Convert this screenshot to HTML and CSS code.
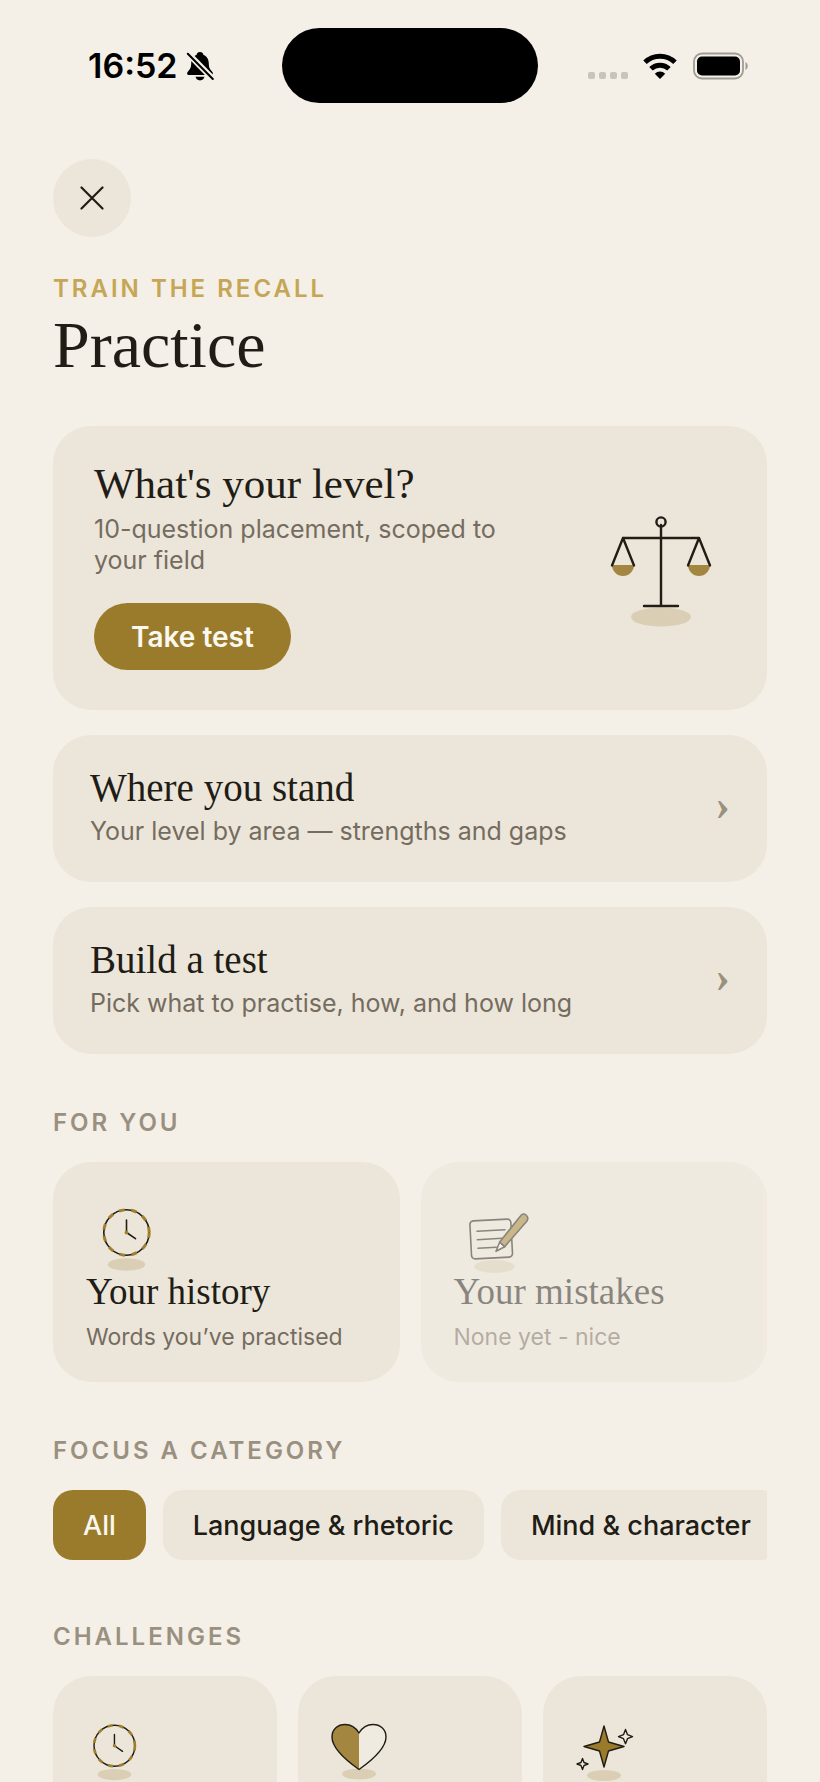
FILE: index.html
```html
<!DOCTYPE html>
<html lang="en">
<head>
  <meta charset="UTF-8">
  <meta name="viewport" content="width=device-width, initial-scale=1">
  <title>Practice</title>
  <link rel="stylesheet" href="styles.css">
</head>
<body>
  <div class="screen">

    <!-- Status bar -->
    <div class="statusbar">
      <div class="status-left">
        <span class="time">16:52</span>
        <svg class="bell" width="28" height="30" viewBox="0 0 28 30">
          <path d="M14 1c-2 0-3.200 1.200-3.400 2.700C6.800 5.200 5.300 8.500 5.200 12.500c-.1 4.500-1.200 5.800-3 7.700C.500 22 .800 24 3.200 24h21.600c2.400 0 2.700-2 1-3.800-1.800-1.900-2.900-3.200-3-7.700-.1-4-1.600-7.300-5.400-8.800C17.200 2.200 16 1 14 1z"/>
          <path d="M9.500 25.800h9c-.6 2.200-2.300 3.600-4.500 3.600s-3.900-1.400-4.500-3.600z"/>
          <path class="bell-gap" d="M1 1.500l26 26.500"/>
          <path class="bell-slash" d="M1.800 2.800l25 25.200"/>
        </svg>
      </div>
      <div class="island"></div>
      <div class="status-right">
        <svg width="40" height="26" viewBox="0 0 40 26" fill="#c8c3bb">
          <rect x="0" y="19" width="7" height="7" rx="2"/>
          <rect x="11" y="19" width="7" height="7" rx="2"/>
          <rect x="22" y="19" width="7" height="7" rx="2"/>
          <rect x="33" y="19" width="7" height="7" rx="2"/>
        </svg>
        <svg width="34" height="26" viewBox="0 0 34 26">
          <path d="M2 9.300a21.500 21.500 0 0 1 30 0" fill="none" stroke="#000" stroke-width="5"/>
          <path d="M8 15.800a13 13 0 0 1 18 0" fill="none" stroke="#000" stroke-width="5"/>
          <path d="M17 26l-5.200-5.300a7.400 7.400 0 0 1 10.400 0z"/>
        </svg>
        <svg width="56" height="28" viewBox="0 0 56 28">
          <rect x="2" y="1.500" width="49" height="25" rx="8" fill="none" stroke="#9f9b95" stroke-width="1.800"/>
          <rect x="5" y="4.500" width="43" height="19" rx="5"/>
          <path d="M53.500 10c3 1.500 3 6.500 0 8z" fill="#9f9b95"/>
        </svg>
      </div>
    </div>

    <main class="content">
      <button class="close" type="button" aria-label="Close">
        <svg width="24" height="24" viewBox="0 0 24 24">
          <path d="M1.500 1.500l21 21M22.500 1.500l-21 21" fill="none" stroke="#211c15" stroke-width="2.200" stroke-linecap="round"/>
        </svg>
      </button>

      <p class="eyebrow gold">TRAIN THE RECALL</p>
      <h1>Practice</h1>

      <!-- Placement test -->
      <section class="card level">
        <div class="level-text">
          <h2>What's your level?</h2>
          <p class="sub">10-question placement, scoped to your field</p>
          <button class="take-test" type="button">Take test</button>
        </div>
        <svg class="scales" width="130" height="130" viewBox="0 -2 130 130">
          <ellipse cx="65" cy="115" rx="30" ry="9.500" fill="#dacfb5"/>
          <path d="M16 63h22a11 11 0 0 1-22 0zM92 63h22a11 11 0 0 1-22 0z" fill="#a38740"/>
          <g fill="none" stroke="#211c15" stroke-width="2.400" stroke-linecap="round" stroke-linejoin="round">
            <circle cx="65" cy="20" r="4.600"/>
            <path d="M65 23v81M48 104h34M27 36h76M16 63.500l11-27.500 11 27.500M92 63.500l11-27.500 11 27.500"/>
          </g>
        </svg>
      </section>

      <a class="card row" href="#stand">
        <span class="row-text">
          <span class="row-title">Where you stand</span>
          <span class="sub">Your level by area — strengths and gaps</span>
        </span>
        <span class="chevron">›</span>
      </a>

      <a class="card row" href="#build">
        <span class="row-text">
          <span class="row-title">Build a test</span>
          <span class="sub">Pick what to practise, how, and how long</span>
        </span>
        <span class="chevron">›</span>
      </a>

      <!-- For you -->
      <h3 class="eyebrow section">FOR YOU</h3>
      <div class="tiles">
        <a class="card tile" href="#history">
          <svg width="80" height="80" viewBox="0 0 80 80">
            <ellipse cx="40.500" cy="69.500" rx="18.700" ry="6.200" fill="#dacfb5"/>
            <g fill="none" stroke="#211c15" stroke-width="1.600" stroke-linecap="round">
              <circle cx="40.500" cy="37.500" r="22.700"/>
              <circle cx="40.500" cy="37.500" r="22.700" stroke="#a0802c" stroke-width="3" stroke-dasharray="5.500 6.850" stroke-linecap="butt"/>
              <path d="M40.500 37.500v-12.500M40.500 37.500l9 6.200"/>
            </g>
            <circle cx="40.500" cy="37.500" r="1.900" fill="#a0802c"/>
          </svg>
          <span class="tile-title">Your history</span>
          <span class="tile-sub">Words you’ve practised</span>
        </a>
        <a class="card tile disabled" href="#mistakes" aria-disabled="true">
          <svg width="80" height="80" viewBox="0 0 80 80">
            <ellipse cx="40.500" cy="71.500" rx="20.300" ry="6.500" fill="#dacfb5"/>
            <g fill="none" stroke="#211c15" stroke-width="1.600" stroke-linecap="round" stroke-linejoin="round">
              <rect x="16.700" y="25" width="41" height="38" rx="3.500" transform="rotate(-3 37.200 44)"/>
              <path d="M23 36.300l28-1.600M23.300 44.700l24.400-1.400M24 53.300l18.300-1"/>
              <path d="M42 56.300l3.700-9.300 5 4.700z" fill="#faf7f1"/>
              <path d="M45.700 47L66.500 21q2.500-3.500 5.500-1t1 6L50.700 51.700z" fill="#a0802c"/>
            </g>
          </svg>
          <span class="tile-title">Your mistakes</span>
          <span class="tile-sub">None yet - nice</span>
        </a>
      </div>

      <!-- Category filter -->
      <h3 class="eyebrow section">FOCUS A CATEGORY</h3>
      <div class="chips">
        <button class="chip active" type="button">All</button>
        <button class="chip" type="button">Language &amp; rhetoric</button>
        <button class="chip" type="button">Mind &amp; character</button>
      </div>

      <!-- Challenges -->
      <h3 class="eyebrow section challenges-title">CHALLENGES</h3>
      <div class="tiles">
        <a class="card challenge" href="#timed" aria-label="Timed">
          <svg width="72" height="72" viewBox="0 0 80 80">
            <ellipse cx="40.500" cy="69.500" rx="18.700" ry="6.200" fill="#dacfb5"/>
            <g fill="none" stroke="#211c15" stroke-width="1.600" stroke-linecap="round">
              <circle cx="40.500" cy="37.500" r="22.700"/>
              <circle cx="40.500" cy="37.500" r="22.700" stroke="#a0802c" stroke-width="3" stroke-dasharray="5.500 6.850" stroke-linecap="butt"/>
              <path d="M40.500 37.500v-12.500M40.500 37.500l9 6.200"/>
            </g>
            <circle cx="40.500" cy="37.500" r="1.900" fill="#a0802c"/>
          </svg>
        </a>
        <a class="card challenge" href="#lives" aria-label="Lives">
          <svg width="72" height="72" viewBox="0 0 72 72">
            <ellipse cx="36" cy="62" rx="17" ry="5.500" fill="#dacfb5"/>
            <path d="M36 57.500C24 49 9 37 9 25 9 17 15 12.500 22 12.500c6.500 0 11 3.500 14 8.500z" fill="#a38740"/>
            <path d="M36 57.500C48 49 63 37 63 25c0-8-6-12.500-13-12.500-6.500 0-11 3.500-14 8.500z" fill="#f0ebe1"/>
            <path d="M36 57.500C24 49 9 37 9 25 9 17 15 12.500 22 12.500c6.500 0 11 3.500 14 8.500 3-5 7.500-8.500 14-8.500 7 0 13 4.500 13 12.500 0 12-15 24-27 32.500z" fill="none" stroke="#211c15" stroke-width="1.400" stroke-linejoin="round"/>
          </svg>
        </a>
        <a class="card challenge" href="#perfect" aria-label="Perfect">
          <svg width="72" height="72" viewBox="0 0 72 72">
            <ellipse cx="36" cy="63.500" rx="17" ry="5.500" fill="#dacfb5"/>
            <g stroke="#211c15" stroke-width="1.400" stroke-linejoin="round">
              <path d="M36 14l4.500 16L56 34.500 40.500 39 36 55l-4.500-16L16 34.500 31.500 30z" fill="#9a7b2c"/>
              <path d="M57.500 17.500l2 5.200 5 2-5 2-2 5-2-5-5-2 5-2zM14.500 46.500l1.500 4 4 1.500-4 1.500-1.500 4-1.500-4-4-1.500 4-1.500z" fill="#f0ebe1"/>
            </g>
          </svg>
        </a>
      </div>
    </main>
  </div>
</body>
</html>
```
FILE: styles.css
```css
* {
  box-sizing: border-box;
}
body {
  margin: 0;
  background-color: #f4efe7;
  color: #211c15;
  font-family: Inter, "Liberation Sans", sans-serif;
}
button {
  font-family: inherit;
  border: none;
  cursor: pointer;
}
a {
  color: inherit;
  text-decoration: none;
}
svg {
  display: block;
  flex-shrink: 0;
}
h1, h2, h3, p {
  margin: 0;
}
.screen {
  height: 100vh;
  overflow: hidden;
}

/* Status bar */
.statusbar {
  display: grid;
  grid-template-columns: 1fr 256px 1fr;
  align-items: center;
  padding-top: 28px;
  color: #000000;
}
.status-left {
  display: flex;
  align-items: center;
  gap: 8px;
  padding-left: 88px;
}
.time {
  font-size: 34px;
  line-height: 40px;
  font-weight: 600;
}
.bell-gap {
  stroke: #f4efe7;
  stroke-width: 6;
}
.bell-slash {
  stroke: #000000;
  stroke-width: 2;
  stroke-linecap: round;
}
.island {
  height: 75px;
  border-radius: 38px;
  background-color: #000000;
}
.status-right {
  display: flex;
  align-items: center;
  justify-content: flex-end;
  gap: 15px;
  padding-right: 72px;
}

.content {
  padding: 56px 53px 0;
}
.close {
  display: flex;
  align-items: center;
  justify-content: center;
  width: 78px;
  height: 78px;
  padding: 0;
  border-radius: 50%;
  background-color: #ece6da;
  margin-bottom: 37px;
}
.eyebrow {
  font-size: 24px;
  line-height: 30px;
  font-weight: 600;
  letter-spacing: 3px;
  color: #9a9080;
}
.gold {
  color: #c5a654;
}
h1, h2, .row-title, .tile-title, .chevron {
  font-family: "Liberation Serif", serif;
  font-weight: 400;
}
h1 {
  font-size: 66px;
  line-height: 82px;
  margin-bottom: 40px;
}

/* Cards */
.card {
  background-color: #ece6da;
  border-radius: 38px;
}
.sub {
  font-size: 25px;
  line-height: 31px;
  color: #756c60;
}
.level {
  display: flex;
  align-items: center;
  gap: 60px;
  padding: 33px 41px 40px;
}
.level-text {
  flex: 1;
}
h2 {
  font-size: 43px;
  line-height: 50px;
  margin-bottom: 5px;
}
.take-test {
  margin-top: 27px;
  height: 67px;
  padding: 0 37px;
  border-radius: 34px;
  background-color: #9a7b2c;
  color: #fbf8f0;
  font-size: 28px;
  font-weight: 600;
}
.row {
  display: flex;
  align-items: center;
  justify-content: space-between;
  margin-top: 25px;
  padding: 29px 37px 35px;
}
.row-text {
  display: flex;
  flex-direction: column;
  gap: 4px;
}
.row-title {
  font-size: 39px;
  line-height: 48px;
}
.chevron {
  font-size: 44px;
  line-height: 44px;
  font-weight: 700;
  color: #9a9080;
}

/* Sections */
.section {
  margin: 54px 0 24px;
}
.tiles {
  display: flex;
  gap: 21px;
}
.tile {
  flex: 1;
  display: flex;
  flex-direction: column;
  padding: 33px 33px 30px;
}
.tile-title {
  font-size: 37px;
  line-height: 34px;
}
.tile-sub {
  margin-top: 13px;
  font-size: 23px;
  line-height: 30px;
  color: #756c60;
}
.disabled {
  opacity: 0.5;
}
.chips {
  display: flex;
  gap: 17px;
  overflow: hidden;
}
.chip {
  flex-shrink: 0;
  height: 70px;
  padding: 0 30px;
  border-radius: 20px;
  background-color: #ece6da;
  color: #211c15;
  font-size: 27px;
  font-weight: 500;
}
.chip.active {
  background-color: #9a7b2c;
  color: #fbf8f0;
}
.challenges-title {
  margin-top: 62px;
}
.challenge {
  flex: 1;
  min-height: 220px;
  padding: 36px 25px;
}
```
